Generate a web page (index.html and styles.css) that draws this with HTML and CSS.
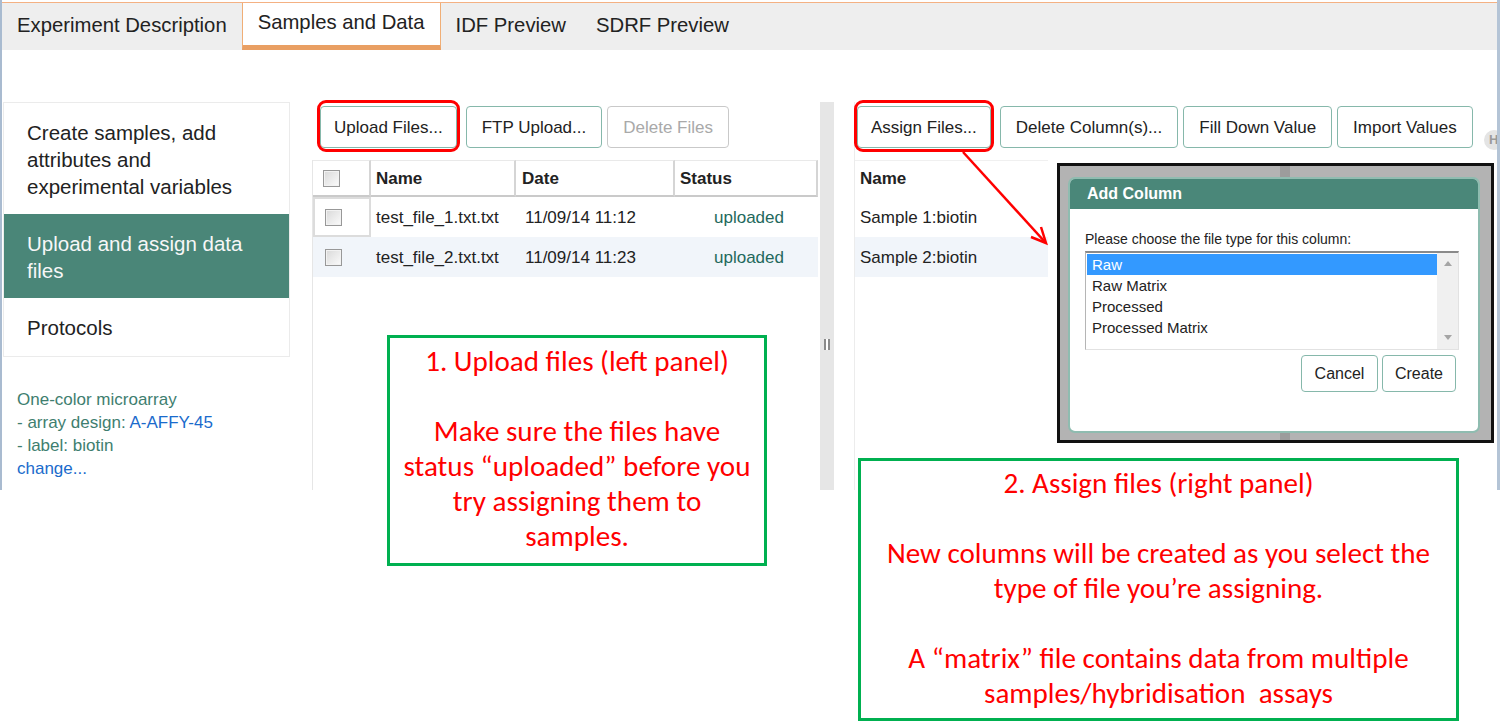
FILE: index.html
```html
<!DOCTYPE html>
<html lang="en">
<head>
<meta charset="utf-8">
<title>Samples and Data</title>
<link rel="stylesheet" href="styles.css">
</head>
<body>
<div class="page">
  <div class="app">
    <nav class="tabs">
      <div class="tab">Experiment Description</div>
      <div class="tab active">Samples and Data</div>
      <div class="tab">IDF Preview</div>
      <div class="tab">SDRF Preview</div>
    </nav>
    <div class="main">
      <aside class="leftcol">
        <ul class="sidenav">
          <li>Create samples, add attributes and experimental variables</li>
          <li class="on">Upload and assign data files</li>
          <li class="last">Protocols</li>
        </ul>
        <div class="info">
          <div>One-color microarray</div>
          <div>- array design: <a href="#">A-AFFY-45</a></div>
          <div>- label: biotin</div>
          <div><a href="#">change...</a></div>
        </div>
      </aside>
      <section class="mid">
        <div class="toolbar">
          <button class="btn hl">Upload Files...</button>
          <button class="btn">FTP Upload...</button>
          <button class="btn" disabled>Delete Files</button>
        </div>
        <div class="grid">
          <div class="ftable">
            <div class="th chk"><span class="cb"></span></div>
            <div class="th">Name</div>
            <div class="th date">Date</div>
            <div class="th">Status</div>

            <div class="td chk focus"><span class="cb"></span></div>
            <div class="td">test_file_1.txt.txt</div>
            <div class="td date">11/09/14 11:12</div>
            <div class="td status">uploaded</div>

            <div class="td chk alt"><span class="cb"></span></div>
            <div class="td alt">test_file_2.txt.txt</div>
            <div class="td date alt">11/09/14 11:23</div>
            <div class="td status alt">uploaded</div>
          </div>
        </div>
      </section>
      <div class="splitter"><span class="grip"></span></div>
      <section class="right">
        <div class="toolbar r">
          <button class="btn hl">Assign Files...</button>
          <button class="btn">Delete Column(s)...</button>
          <button class="btn">Fill Down Value</button>
          <button class="btn">Import Values</button>
          <span class="hbtn">H</span>
        </div>
        <div class="stable">
          <div class="th">Name</div>
          <div class="td">Sample 1:biotin</div>
          <div class="td alt">Sample 2:biotin</div>
        </div>
      </section>
    </div>
  </div>

  <div class="shot">
    <div class="dlg">
      <div class="dlg-head">Add Column</div>
      <div class="dlg-body">
        <p class="dlg-label">Please choose the file type for this column:</p>
        <div class="listbox">
          <ul class="opts">
            <li class="sel">Raw</li>
            <li>Raw Matrix</li>
            <li>Processed</li>
            <li>Processed Matrix</li>
          </ul>
          <div class="sbar"><span class="up"></span><span class="down"></span></div>
        </div>
        <div class="dlg-actions">
          <button class="btn dbtn cancel">Cancel</button>
          <button class="btn dbtn create">Create</button>
        </div>
      </div>
    </div>
  </div>

  <svg class="arrow" width="1500" height="728" viewBox="0 0 1500 728">
    <line x1="963" y1="152" x2="1045" y2="242" stroke="#ff0000" stroke-width="2.5"/>
    <polyline points="1041,227 1046,243 1031,237" fill="none" stroke="#ff0000" stroke-width="2.5"/>
  </svg>

  <div class="note note1">
    <p>1. Upload files (left panel)</p>
    <p class="gap">Make sure the files have<br>status “uploaded” before you<br>try assigning them to<br>samples.</p>
  </div>
  <div class="note note2">
    <p>2. Assign files (right panel)</p>
    <p class="gap">New columns will be created as you select the<br>type of file you’re assigning.</p>
    <p class="gap">A “matrix” file contains data from multiple<br>samples/hybridisation&nbsp; assays</p>
  </div>
</div>
</body>
</html>
```

FILE: styles.css
```css
* { box-sizing: border-box; margin: 0; padding: 0; }
body {
  margin: 0;
  background: #fff;
  font-family: "Liberation Sans", Arial, sans-serif;
  color: #222;
}
.page { position: relative; width: 1500px; height: 728px; overflow: hidden; }

/* ---------- application frame ---------- */
.app {
  height: 490px;
  padding-top: 2px;
  border-left: 2px solid #a9bbd0;
  border-right: 3px solid #b4c4d6;
  display: flex;
  flex-direction: column;
  overflow: hidden;
}

.tabs {
  flex: none;
  display: flex;
  height: 48px;
  background: #eeeeee;
  border-top: 1px solid #f4b183;
}
.tab {
  padding: 10px 15px 0;
  font-size: 20.3px;
  line-height: 24px;
  white-space: nowrap;
}
.tab.active {
  background: #fff;
  border-left: 1px solid #f0ae76;
  border-right: 1px solid #f0ae76;
  border-bottom: 5px solid #e99f63;
  padding-top: 7px;
}

.main {
  flex: 1;
  min-height: 0;
  display: flex;
  padding-top: 52px;
}

/* ---------- left column ---------- */
.leftcol { flex: none; width: 287px; margin-left: 1px; }
.sidenav {
  list-style: none;
  border: 1px solid #ebebeb;
  font-size: 20.5px;
  line-height: 27px;
}
.sidenav li { padding: 16px 20px 14px 23px; }
.sidenav li.on { background: #4a8678; color: #f7f7f7; }
.sidenav li.last { padding-bottom: 15px; }

.info {
  margin-top: 31px;
  padding-left: 14px;
  font-size: 17px;
  line-height: 23px;
  color: #3e7e6f;
}
.info a { color: #1a6bcc; text-decoration: none; }

/* ---------- buttons ---------- */
.toolbar {
  flex: none;
  display: flex;
  align-items: flex-start;
  gap: 5px;
  height: 58px;
  padding: 4px 0 0 8px;
}
.toolbar.r { padding-left: 2px; }
.btn {
  flex: none;
  position: relative;
  height: 42px;
  padding: 2px 15px 0;
  border: 1px solid #86b8ab;
  border-radius: 4px;
  background: #fff;
  font-family: "Liberation Sans", Arial, sans-serif;
  font-size: 17px;
  color: #222;
  white-space: nowrap;
}
.btn:disabled { color: #a9a9a9; border-color: #c9c9c9; }
.btn.hl { padding: 2px 13px 0; margin-right: 4px; }
.btn.hl::after {
  content: "";
  position: absolute;
  top: -7px;
  bottom: -5px;
  left: -4px;
  right: -4px;
  border: 3px solid #ff0000;
  border-radius: 9px;
}
.hbtn {
  flex: none;
  width: 20px;
  height: 20px;
  margin: 24px 0 0 6px;
  border-radius: 50%;
  background: #e4e4e4;
  color: #9a9a9a;
  font-size: 13px;
  font-weight: bold;
  line-height: 20px;
  text-align: center;
}

/* ---------- middle panel ---------- */
.mid {
  flex: none;
  width: 508px;
  margin-left: 22px;
  display: flex;
  flex-direction: column;
}
.grid { flex: 1; border-left: 1px solid #e6e6e6; }
.ftable {
  display: grid;
  grid-template-columns: 58px 145px 159px 143px;
  font-size: 17px;
}
.th {
  height: 37px;
  display: flex;
  align-items: center;
  padding: 2px 0 0 5px;
  font-weight: bold;
  border-top: 1px solid #e9e9e9;
  border-bottom: 2px solid #cacaca;
  border-right: 2px solid #d5d5d5;
}
.th.date { padding-left: 6px; }
.th.chk { padding: 0 0 0 10px; }
.td {
  height: 40px;
  display: flex;
  align-items: center;
  padding: 2px 0 0 5px;
  white-space: nowrap;
}
.td.chk { padding: 0 0 0 12px; }
.td.chk.focus { border: 2px solid #dcdcdc; padding-left: 10px; }
.td.date { padding-left: 9px; }
.td.status { justify-content: center; padding-left: 5px; color: #23695c; }
.alt { background: #f1f5fa; }
.cb {
  width: 17px;
  height: 17px;
  border: 1px solid #989898;
  background: linear-gradient(135deg, #d9d9d9, #fbfbfb);
  box-shadow: inset 0 0 0 1px #f2f2f2;
}

/* ---------- splitter ---------- */
.splitter {
  flex: none;
  width: 14px;
  background: #e6e6e6;
  display: flex;
  justify-content: center;
  align-items: flex-start;
}
.grip {
  margin-top: 237px;
  width: 6px;
  height: 11px;
  background: #fff;
  border-left: 2px solid #8a8a8a;
  border-right: 2px solid #8a8a8a;
}

/* ---------- right panel ---------- */
.right {
  flex: 1;
  min-width: 0;
  margin-left: 20px;
  border-left: 1px solid #ececec;
  display: flex;
  flex-direction: column;
}
.stable { width: 193px; font-size: 17px; }
.stable .th { border-right: 0; border-bottom: 0; border-top: 1px solid #f0f0f0; padding-top: 0; }

/* ---------- dialog screenshot overlay ---------- */
.shot {
  position: absolute;
  left: 1057px;
  top: 163px;
  width: 437px;
  height: 280px;
  border: 3px solid #111;
  padding: 11px 0 0 8px;
  background: linear-gradient(to right, #b3b3b3 220px, #9c9c9c 220px, #9c9c9c 230px, #b3b3b3 230px);
}
.dlg {
  width: 412px;
  height: 256px;
  border: 2px solid #8fbcb0;
  border-radius: 7px;
  background: #fff;
  overflow: hidden;
}
.dlg-head {
  height: 30px;
  line-height: 30px;
  padding-left: 17px;
  background: #4a8779;
  color: #fff;
  font-size: 16px;
  font-weight: bold;
}
.dlg-body { padding: 21px 0 0 15px; }
.dlg-label { font-size: 14px; line-height: 18px; margin-bottom: 3px; }
.listbox {
  display: flex;
  width: 374px;
  height: 99px;
  border-top: 2px solid #8a8a8a;
  border-left: 1px solid #b5b5b5;
  border-right: 1px solid #e2e2e2;
  border-bottom: 1px solid #e2e2e2;
}
.opts {
  list-style: none;
  width: 351px;
  padding: 1px 0 0 1px;
  font-size: 15px;
}
.opts li { height: 21px; line-height: 21px; padding-left: 5px; }
.opts li.sel { background: #3399ff; color: #fff; }
.sbar {
  width: 21px;
  background: #f0f0f0;
  display: flex;
  flex-direction: column;
  justify-content: space-between;
  align-items: center;
  padding: 8px 0 9px;
}
.up, .down { width: 0; height: 0; border-left: 4px solid transparent; border-right: 4px solid transparent; }
.up { border-bottom: 5px solid #a5a5a5; }
.down { border-top: 5px solid #a5a5a5; }
.dlg-actions {
  display: flex;
  justify-content: flex-end;
  gap: 4px;
  width: 371px;
  margin-top: 5px;
}
.dbtn { height: 37px; padding: 0; font-size: 16px; }
.dbtn.cancel { width: 77px; }
.dbtn.create { width: 74px; }

/* ---------- annotations ---------- */
.arrow { position: absolute; left: 0; top: 0; pointer-events: none; }
.note {
  position: absolute;
  border: 3px solid #00b050;
  background: #fff;
  color: #ff0000;
  font-family: Carlito, Lato, sans-serif;
  font-size: 29.1px;
  line-height: 35px;
  text-align: center;
  white-space: nowrap;
}
.note .gap { margin-top: 35px; }
.note1 { left: 387px; top: 335px; width: 380px; height: 231px; padding-top: 6px; }
.note2 { left: 858px; top: 458px; width: 601px; height: 263px; padding-top: 5px; }
```
